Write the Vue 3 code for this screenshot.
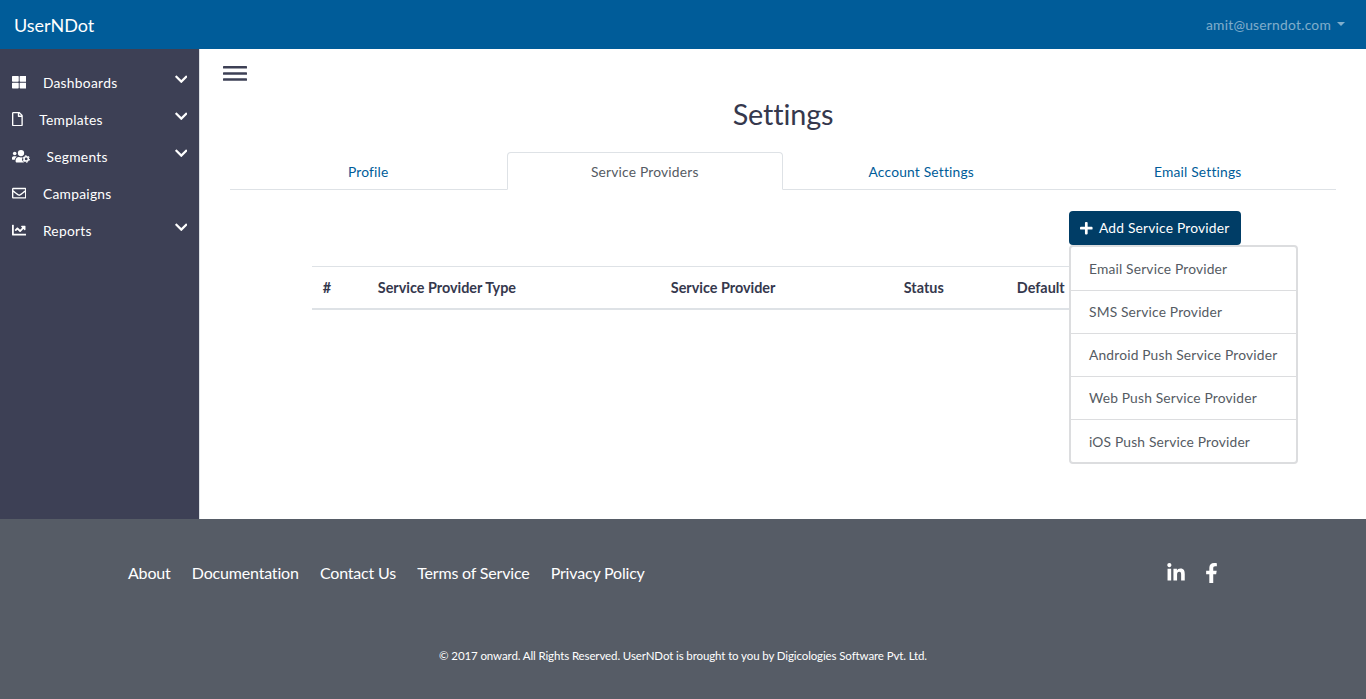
<script setup>
const icons = {
  grid: { w: 512, d: 'M296 32h192c13.255 0 24 10.745 24 24v160c0 13.255-10.745 24-24 24H296c-13.255 0-24-10.745-24-24V56c0-13.255 10.745-24 24-24zm-80 0H24C10.745 32 0 42.745 0 56v160c0 13.255 10.745 24 24 24h192c13.255 0 24-10.745 24-24V56c0-13.255-10.745-24-24-24zM0 296v160c0 13.255 10.745 24 24 24h192c13.255 0 24-10.745 24-24V296c0-13.255-10.745-24-24-24H24c-13.255 0-24 10.745-24 24zm296 184h192c13.255 0 24-10.745 24-24V296c0-13.255-10.745-24-24-24H296c-13.255 0-24 10.745-24 24v160c0 13.255 10.745 24 24 24z' },
  file: { w: 384, d: 'M369.9 97.9L286 14C277 5 264.8-.1 252.1-.1H48C21.5 0 0 21.5 0 48v416c0 26.5 21.5 48 48 48h288c26.5 0 48-21.5 48-48V131.9c0-12.7-5.1-25-14.1-34zM332.1 128H256V51.9l76.1 76.1zM48 464V48h160v104c0 13.3 10.7 24 24 24h104v288H48z' },
  users: { w: 640 },
  mail: { w: 512, d: 'M464 64H48C21.49 64 0 85.49 0 112v288c0 26.51 21.49 48 48 48h416c26.51 0 48-21.49 48-48V112c0-26.51-21.49-48-48-48zm0 48v40.805c-22.422 18.259-58.168 46.651-134.587 106.49-16.841 13.247-50.201 45.072-73.413 44.701-23.208.375-56.579-31.459-73.413-44.701C106.18 199.465 70.425 171.067 48 152.805V112h416zM48 400V214.398c22.914 18.251 55.409 43.862 104.938 82.646 21.857 17.205 60.134 55.186 103.062 54.955 42.717.231 80.509-37.199 103.053-54.947 49.528-38.783 82.032-64.401 104.947-82.653V400H48z' },
  chart: { w: 512, d: 'M496 384H64V80c0-8.84-7.16-16-16-16H16C7.16 64 0 71.16 0 80v336c0 17.67 14.33 32 32 32h464c8.84 0 16-7.16 16-16v-32c0-8.84-7.16-16-16-16zM464 96H345.94c-21.38 0-32.09 25.85-16.97 40.97l32.4 32.4L288 242.75l-73.37-73.37c-12.5-12.5-32.76-12.5-45.25 0l-68.69 68.69c-6.25 6.25-6.25 16.38 0 22.63l22.62 22.62c6.25 6.25 16.38 6.25 22.63 0L192 237.25l73.37 73.37c12.5 12.5 32.76 12.5 45.25 0l96-96 32.4 32.4c15.12 15.12 40.97 4.41 40.97-16.97V112c.01-8.84-7.15-16-15.99-16z' },
}
const menu = [
  { label: 'Dashboards', icon: 'grid', open: true },
  { label: 'Templates', icon: 'file', open: true },
  { label: 'Segments', icon: 'users', open: true },
  { label: 'Campaigns', icon: 'mail', open: false },
  { label: 'Reports', icon: 'chart', open: true },
]
const tabs = ['Profile', 'Service Providers', 'Account Settings', 'Email Settings']
const providers = ['Email Service Provider', 'SMS Service Provider', 'Android Push Service Provider', 'Web Push Service Provider', 'iOS Push Service Provider']
const links = ['About', 'Documentation', 'Contact Us', 'Terms of Service', 'Privacy Policy']
</script>

<template>
  <div class="page">
    <header class="topbar">
      <a class="brand">UserNDot</a>
      <a class="account">amit@userndot.com<span class="caret"></span></a>
    </header>

    <div class="body">
      <nav class="sidebar">
        <a v-for="m in menu" :key="m.label" class="item">
          <svg class="icon" :class="m.icon" :viewBox="`0 0 ${icons[m.icon].w} 512`" fill="currentColor">
            <path v-if="icons[m.icon].d" :d="icons[m.icon].d" />
            <template v-else>
              <circle cx="96" cy="160" r="64" />
              <circle cx="320" cy="144" r="112" />
              <path d="M0 320c0-35 29-64 64-64h64c18 0 34 7 45 19-40 22-68 61-74 109H32c-18 0-32-14-32-32zM128 432v-29c0-64 51-115 115-115h9c42 20 94 20 136 0h20l-12 60 8 110 30 22H176c-26 0-48-22-48-48z" />
              <circle cx="504" cy="352" r="150" class="gap" />
              <circle cx="504" cy="352" r="77" class="gear" />
              <circle cx="504" cy="352" r="116" class="teeth" />
            </template>
          </svg>
          <span class="label">{{ m.label }}</span>
          <svg v-if="m.open" class="chev" viewBox="0 0 448 512" fill="currentColor"><path d="M207.029 381.476L12.686 187.132c-9.373-9.373-9.373-24.569 0-33.941l22.667-22.667c9.357-9.357 24.522-9.375 33.901-.04L224 284.505l154.745-154.021c9.379-9.335 24.544-9.317 33.901.04l22.667 22.667c9.373 9.373 9.373 24.569 0 33.941L240.971 381.476c-9.373 9.372-24.569 9.372-33.942 0z" /></svg>
        </a>
      </nav>

      <main class="main">
        <svg class="burger" viewBox="0 0 24 15" fill="currentColor">
          <rect width="24" height="2.6" rx=".6" /><rect y="6.2" width="24" height="2.6" rx=".6" /><rect y="12.2" width="24" height="2.6" rx=".6" />
        </svg>
        <h1>Settings</h1>
        <div class="tabs">
          <a v-for="(t, i) in tabs" :key="t" class="tab" :class="{ active: i === 1 }">{{ t }}</a>
        </div>
        <div class="panel">
          <div class="actions">
            <button class="add">
              <svg viewBox="0 0 448 512" fill="currentColor"><path d="M416 208H272V64c0-17.67-14.33-32-32-32h-32c-17.67 0-32 14.33-32 32v144H32c-17.67 0-32 14.33-32 32v32c0 17.67 14.33 32 32 32h144v144c0 17.67 14.33 32 32 32h32c17.67 0 32-14.33 32-32V304h144c17.67 0 32-14.33 32-32v-32c0-17.67-14.33-32-32-32z" /></svg>
              <span>Add Service Provider</span>
            </button>
            <div class="dropdown">
              <a v-for="p in providers" :key="p">{{ p }}</a>
            </div>
          </div>
          <div class="thead">
            <span>#</span><span>Service Provider Type</span><span>Service Provider</span><span>Status</span><span>Default</span>
          </div>
        </div>
      </main>
    </div>

    <footer class="footer">
      <div class="row">
        <div class="links"><a v-for="l in links" :key="l">{{ l }}</a></div>
        <div class="social">
          <svg width="18" height="20" viewBox="0 0 448 512" fill="currentColor"><path d="M100.28 448H7.4V148.9h92.88zM53.79 108.1C24.09 108.1 0 83.5 0 53.8a53.79 53.79 0 0 1 107.58 0c0 29.7-24.1 54.3-53.79 54.3zM447.9 448h-92.68V302.4c0-34.7-.7-79.2-48.29-79.2-48.29 0-55.69 37.7-55.69 76.7V448h-92.78V148.9h89.08v40.8h1.3c12.4-23.5 42.69-48.3 87.88-48.3 94 0 111.28 61.9 111.28 142.3V448z" /></svg>
          <svg width="13" height="20" viewBox="0 0 320 512" fill="currentColor"><path d="M279.14 288l14.22-92.66h-88.91v-60.13c0-25.35 12.42-50.06 52.24-50.06h40.42V6.26S260.43 0 225.36 0c-73.22 0-121.08 44.38-121.08 124.72v70.62H22.89V288h81.39v224h100.17V288z" /></svg>
        </div>
      </div>
      <p class="copy">© 2017 onward. All Rights Reserved. UserNDot is brought to you by Digicologies Software Pvt. Ltd.</p>
    </footer>
  </div>
</template>

<style>
body { margin: 0; overflow: hidden; }
</style>

<style scoped>
* { box-sizing: border-box; }
.page {
  width: 1366px; height: 699px; display: flex; flex-direction: column;
  font-family: Lato, sans-serif; font-size: 13.8px; letter-spacing: .19px; line-height: 21.6px; color: #35384d; background: #fff;
}
.topbar {
  height: 49px; flex: none; background: #005c99; display: flex; align-items: center;
  justify-content: space-between; padding: 2px 21px 0 14px;
}
.brand { color: #fff; font-size: 18px; letter-spacing: 0; }
.account { color: rgba(255, 255, 255, .5); display: flex; align-items: center; letter-spacing: .24px; margin-top: -2px; }
.caret { margin: -2px 0 0 6px; border: 4.8px solid transparent; border-top-color: currentColor; border-bottom: 0; }
.body { height: 470px; flex: none; display: flex; }
.sidebar { width: 200px; background: #3d4055; border-right: 1px solid #dee2e6; padding-top: 15px; color: #fff; }
.item { height: 37px; display: flex; align-items: center; padding: 0 11.8px 0 12px; letter-spacing: .28px; }
.icon { height: 14.4px; width: auto; flex: none; margin-top: -1px; }
.label { margin: 1px auto 0 16.5px; }
.chev { width: 12.6px; height: 14.4px; margin-top: -7px; }
.gap { fill: #3d4055; }
.gear { fill: none; stroke: currentColor; stroke-width: 54; }
.teeth { fill: none; stroke: currentColor; stroke-width: 36; stroke-dasharray: 60.7 60.7; }
.main { flex: 1; padding: 17px 30px 0; }
.burger { width: 24px; height: 15px; margin-left: -6.6px; display: block; color: #3d4055; }
h1 { font-size: 28.8px; font-weight: 400; line-height: 34.6px; letter-spacing: -.12px; margin: 16px 0 20px; text-align: center; }
.tabs { display: flex; border-bottom: 1px solid #dee2e6; height: 38px; }
.tab {
  flex: 1; height: 38px; border: 1px solid transparent; border-radius: 4px 4px 0 0;
  color: #005c99; text-align: center; padding-top: 8.5px;
}
.active { color: #555b63; background: #fff; border-color: #dee2e6 #dee2e6 #fff; }
.panel { padding: 21px 55px 0 82px; }
.actions { position: relative; display: flex; justify-content: flex-end; padding-right: 40px; }
.add {
  width: 172px; height: 34px; border: 0; border-radius: 4px; background: #003d66; color: #fff;
  font: inherit; letter-spacing: inherit; padding: 0 11px; display: flex; align-items: center; gap: 6.4px; white-space: nowrap;
}
.add svg { width: 12.6px; height: 14.4px; flex: none; margin-top: 1px; }
.dropdown {
  position: absolute; top: 34px; right: -17px; width: 229px; height: 219px; background: #fff;
  border: 2px solid #dcdddf; border-radius: 4px; display: flex; flex-direction: column; color: #555b63; letter-spacing: .17px;
}
.dropdown a { flex: 1; padding: 1px 18px 0; display: flex; align-items: center; white-space: nowrap; }
.dropdown a:first-child { padding-top: 2px; }
.dropdown a:last-child { flex: none; height: 43px; padding-top: 2px; }
.dropdown a + a { border-top: 1px solid #dcdddf; }
.thead {
  margin-top: 21px; height: 44px; border-top: 1px solid #dee2e6; border-bottom: 2px solid #dee2e6;
  display: grid; grid-template-columns: 55px 293px 233px 113px 1fr; align-items: center;
  font-size: 14.4px; letter-spacing: 0; font-weight: 700; padding: 2px 0 0 10.8px;
}
.footer { height: 180px; flex: none; background: #565c66; color: #fff; padding-top: 42px; }
.row { display: flex; justify-content: space-between; align-items: center; padding: 0 148.3px 0 128px; height: 24px; }
.links { display: flex; gap: 21.2px; font-size: 16px; letter-spacing: -.18px; }
.social { display: flex; gap: 20px; align-items: center; }
.copy { margin: 60px 0 0; text-align: center; font-size: 11.5px; letter-spacing: -.115px; }
</style>
